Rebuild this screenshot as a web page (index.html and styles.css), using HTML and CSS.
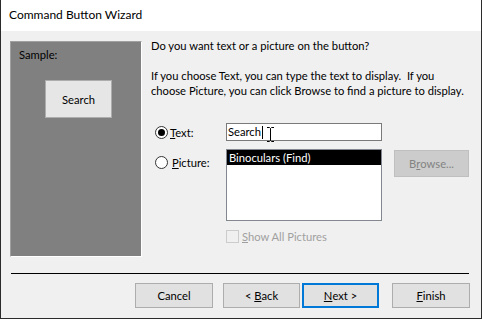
FILE: index.html
```html
<!DOCTYPE html>
<html>
<head>
<meta charset="utf-8">
<link rel="stylesheet" href="styles.css">
</head>
<body>
<div class="window">
  <div class="titlebar">Command Button Wizard</div>
  <div class="content">
    <div class="main">
      <div class="sample">
        <div class="sample-label">Sample:</div>
        <div class="sample-btn">Search</div>
      </div>
      <div class="right">
        <p class="question">Do you want text or a picture on the button?</p>
        <p class="explain">If you choose Text, you can type the text to display.&nbsp; If you<br>choose Picture, you can click Browse to find a picture to display.</p>
        <div class="options">
          <label class="opt">
            <span class="radio checked"></span><span><u>T</u>ext:</span>
          </label>
          <div class="textbox">Search<span class="caret"></span>
            <svg class="ibeam" width="9" height="15" viewBox="0 0 9 15"><path d="M1 0.5h2.5l1 1 1-1H8M4.5 1.5v12M1 14.5h2.5l1-1 1 1H8" fill="none" stroke="#000" stroke-width="1"/></svg>
          </div>
          <div></div>
          <label class="opt opt-pic">
            <span class="radio"></span><span><u>P</u>icture:</span>
          </label>
          <div class="listbox">
            <div class="item selected">Binoculars (Find)</div>
          </div>
          <div class="browse">B<u>r</u>owse...</div>
          <div></div>
          <label class="check">
            <span class="box"></span><span><u>S</u>how All Pictures</span>
          </label>
        </div>
      </div>
    </div>
    <div class="separator"></div>
    <div class="buttons">
      <div class="btn">Cancel</div>
      <div class="btn btn-back">&lt;&nbsp;<u>B</u>ack</div>
      <div class="btn btn-next"><u>N</u>ext &gt;</div>
      <div class="btn btn-finish"><u>F</u>inish</div>
    </div>
  </div>
</div>
</body>
</html>
```
FILE: styles.css
```css
* { box-sizing: border-box; }
html, body { margin: 0; padding: 0; }
body {
  width: 482px;
  height: 319px;
  font-family: Lato, "Noto Sans", sans-serif;
  font-size: 11.2px;
  color: #000;
  background: #fff;
}
.window {
  width: 482px;
  height: 319px;
  display: flex;
  flex-direction: column;
  border: 1px solid #2b2b2b;
  border-top: none;
  background: #f0f0f0;
}
.titlebar {
  height: 31px;
  background: #fff;
  padding-left: 8px;
  line-height: 30px;
  font-size: 12px;
}
.content {
  flex: 1;
  padding: 10px 11px 0 9px;
  display: flex;
  flex-direction: column;
}
.main {
  display: flex;
  gap: 9px;
  height: 216px;
}
.sample {
  flex-shrink: 0;
  width: 132px;
  height: 216px;
  background: #808080;
  border-top: 1px solid #a0a0a0;
  border-left: 1px solid #a0a0a0;
  border-right: 1px solid #fff;
  border-bottom: 1px solid #fff;
  padding: 5px 0 0 8px;
}
.sample-label { line-height: 15px; }
.sample-btn {
  width: 67px;
  height: 38px;
  margin: 18px 0 0 26px;
  background: #e6e6e6;
  border: 1px solid #adadad;
  display: flex;
  align-items: center;
  justify-content: center;
}
.right {
  flex: 1;
  min-width: 0;
  margin-top: -3px;
}
.question, .explain {
  margin: 0;
  line-height: 15px;
  white-space: nowrap;
}
.explain { margin-top: 15px; }
.options {
  margin-top: 25px;
  display: grid;
  grid-template-columns: 71px 156px 87px;
  column-gap: 0;
  padding-left: 4px;
}
.options > .browse { margin-left: 12px; width: 75px; }
.opt {
  display: flex;
  align-items: center;
  gap: 2px;
  height: 18px;
}
.opt-pic {
  align-self: start;
  margin-top: 12px;
  gap: 4px;
}
.radio {
  width: 13px;
  height: 13px;
  border-radius: 50%;
  border: 1px solid #333;
  background: #fff;
  display: flex;
  align-items: center;
  justify-content: center;
}
.radio.checked::after {
  content: "";
  width: 7px;
  height: 7px;
  border-radius: 50%;
  background: #000;
}
.textbox {
  position: relative;
  height: 18px;
  border: 1px solid #7a7a7a;
  background: #fff;
  padding-left: 1px;
  line-height: 16px;
  display: flex;
  align-items: center;
}
.caret {
  display: inline-block;
  width: 1px;
  height: 13px;
  background: #000;
  margin-left: 1px;
}
.ibeam {
  position: absolute;
  left: 39px;
  top: 3px;
}
.listbox {
  margin-top: 8px;
  height: 72px;
  border: 1px solid #828790;
  background: #fff;
  grid-column: 2;
}
.item {
  line-height: 15px;
  padding-left: 2px;
}
.item.selected {
  background: #000;
  color: #fff;
}
.browse {
  margin-top: 9px;
  align-self: start;
  height: 27px;
  background: #cccccc;
  border: 1px solid #bfbfbf;
  color: #838383;
  display: flex;
  align-items: center;
  justify-content: center;
}
.check {
  grid-column: 2;
  margin-top: 9px;
  display: flex;
  align-items: center;
  gap: 3px;
  color: #a0a0a0;
}
.box {
  width: 13px;
  height: 13px;
  border: 1px solid #cccccc;
  background: #f0f0f0;
}
.separator {
  margin-top: 16px;
  height: 1px;
  background: #000;
  margin-right: 1px;
  margin-left: 1px;
}
.buttons {
  margin-top: 9px;
  display: flex;
  justify-content: flex-end;
  padding-right: 0;
}
.btn {
  width: 78px;
  height: 25px;
  background: #e1e1e1;
  border: 1px solid #adadad;
  display: flex;
  align-items: center;
  justify-content: center;
}
.btn-back { margin-left: 10px; width: 77px; }
.btn-next {
  margin-left: 2px;
  width: 77px;
  border: 2px solid #0078d7;
}
.btn-finish { margin-left: 13px; }
```
